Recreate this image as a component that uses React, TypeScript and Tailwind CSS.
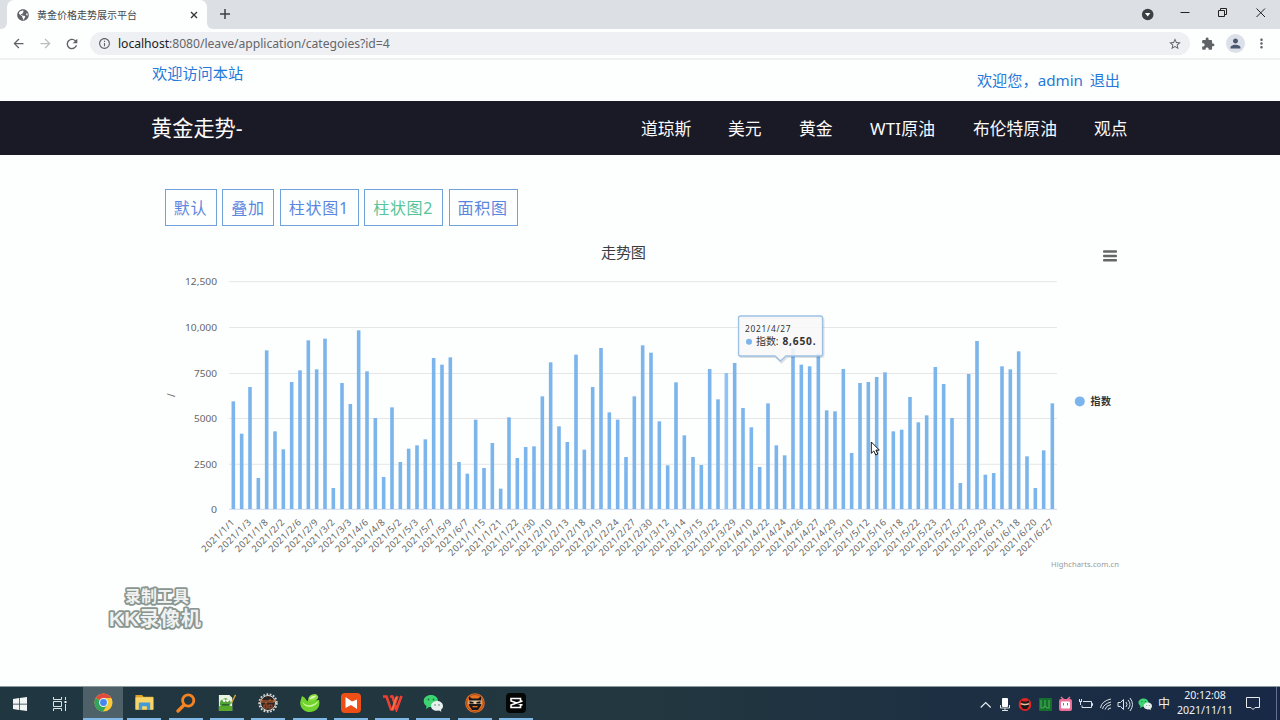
import React from "react";
import { FaGlobeAmericas } from "react-icons/fa";
import { MdPerson, MdRefresh, MdArrowBack, MdArrowForward, MdInfoOutline, MdMoreVert, MdStarBorder, MdExtension } from "react-icons/md";

const tops = [
  394, 491, 351, 624, 241, 484, 538, 336, 301, 211, 298, 206, 654, 339, 402, 181, 304, 444, 621, 412,
  576, 536, 526, 508, 264, 284, 262, 576, 611, 449, 594, 519, 656, 442, 564, 531, 529, 379, 277, 469,
  516, 254, 539, 351, 234, 427, 449, 561, 379, 226, 248, 454, 586, 337, 496, 561, 585, 297, 388, 309,
  279, 414, 472, 591, 400, 526, 556, 235, 284, 289, 250, 421, 424, 297, 549, 339, 336, 321, 307, 484,
  479, 381, 457, 436, 291, 342, 444, 639, 312, 213, 614, 609, 289, 298, 244, 559, 654, 541, 400,
];

const dates = (
  "1/1 1/3 1/8 2/2 2/6 2/9 3/2 3/3 4/6 4/8 5/2 5/3 5/7 5/9 6/7 1/15 1/21 1/22 1/30 2/10 2/13 2/18 2/19 2/24 2/27 2/30 " +
  "3/12 3/14 3/15 3/22 3/29 4/10 4/22 4/24 4/26 4/27 4/29 5/10 5/12 5/16 5/18 5/22 5/23 5/27 5/27 5/29 6/13 6/18 6/20 6/27"
).split(" ");

const gridLines: [string, number, number][] = [
  ["12,500", 281.7, 32],
  ["10,000", 327.5, 32],
  ["7500", 373.5, 23],
  ["5000", 418.5, 23],
  ["2500", 464.3, 23],
  ["0", 509.3, 6],
];

function Chart() {
  return (
    <svg className="block" width="980" height="340" viewBox="150 236 980 340" fontFamily="'Noto Sans','Noto Sans CJK SC',sans-serif">
      <text x="623.5" y="257.8" fontSize="15.2" fill="#3c3c3c" textAnchor="middle" textLength="45">走势图</text>
      <g fill="#666">
        <rect x="1103" y="250.3" width="14" height="2.5" rx="1" />
        <rect x="1103" y="254.7" width="14" height="2.5" rx="1" />
        <rect x="1103" y="259.1" width="14" height="2.5" rx="1" />
      </g>
      {gridLines.map(([label, y, w], i) => (
        <g key={label}>
          <line x1="229" x2="1057" y1={y} y2={y} stroke={i === 5 ? "#ccd6eb" : "#e6e6e6"} strokeWidth="1" />
          <text x={217 - w} y={y + 3.6} fontSize="9.8" fill="#666" textLength={w} lengthAdjust="spacingAndGlyphs">{label}</text>
        </g>
      ))}
      <text transform="translate(175 397) rotate(-90)" fontSize="10" fill="#666">/</text>
      {tops.map((t, i) => {
        const x = 233.2 + i * 8.357;
        const y = 270 + t / 3;
        return (
          <rect key={i} x={Math.round(x * 3) / 3 - 1.8} y={y} width="3.6" height={509 - y} fill={i === 59 ? "#90c4f5" : "#7cb5ec"} />
        );
      })}
      {dates.map((d, i) => (
        <text
          key={i}
          transform={`translate(${235 + i * 16.714} 523) rotate(-45)`}
          fontSize="9.3"
          fill="#666"
          textAnchor="end"
          textLength={d.length === 3 ? 42 : 47.5}
        >
          {"2021/" + d}
        </text>
      ))}
      <circle cx="1079.8" cy="401.4" r="5" fill="#7cb5ec" />
      <text x="1090.5" y="405" fontSize="10" fontWeight="700" fill="#333" textLength="20.5">指数</text>
      <text x="1119" y="567" fontSize="7.6" fill="#999" textAnchor="end" textLength="68">Highcharts.com.cn</text>
      <g>
        <path d="M740.5 317h80a2 2 0 0 1 2 2v35a2 2 0 0 1-2 2H786l-5.5 5.5-5.5-5.5h-34.5a2 2 0 0 1-2-2v-35a2 2 0 0 1 2-2z" transform="translate(1 1)" fill="none" stroke="#000" strokeOpacity=".12" strokeWidth="2" />
        <path d="M740.5 316h80a2 2 0 0 1 2 2v36a2 2 0 0 1-2 2H786l-5.5 5-5.5-5h-34.5a2 2 0 0 1-2-2v-36a2 2 0 0 1 2-2z" fill="#f8f8f8" fillOpacity=".88" stroke="#9dc1e4" strokeWidth="1.3" />
        <text x="745" y="332" fontSize="8.3" fill="#333" textLength="45.5">2021/4/27</text>
        <circle cx="749" cy="341.7" r="3" fill="#7cb5ec" />
        <text x="756" y="345" fontSize="10" fill="#333" textLength="22.5">指数:</text>
        <text x="782.5" y="345" fontSize="10.2" fontWeight="700" fill="#333" textLength="33">8,650.</text>
      </g>
      <path d="M871.3 442v11.3l2.5-2.3 2 4 2-1-1.9-3.9h3.4z" fill="#fff" stroke="#000" strokeWidth=".9" />
    </svg>
  );
}

function Browser() {
  return (
    <header>
      <div className="flex h-[29px] bg-[#dce0e5]">
        <div className="w-[7px] bg-[#fdfffe]"><div className="h-full rounded-br-[6px] bg-[#dce0e5]" /></div>
        <div className="flex w-[200px] items-center rounded-t-[7px] bg-[#fdfffe] pl-[10px] pr-[9px]">
          <FaGlobeAmericas className="size-[12px] text-[#5f6368]" />
          <span className="ml-[8px] pt-px text-[10px] text-[#45484c]">黄金价格走势展示平台</span>
          <svg className="ml-auto" width="8" height="8" viewBox="0 0 8 8" stroke="#333" strokeWidth="1.3"><path d="M1 1l6 6M7 1L1 7" /></svg>
        </div>
        <div className="w-[7px] bg-[#fdfffe]"><div className="h-full rounded-bl-[6px] bg-[#dce0e5]" /></div>
        <svg className="ml-[6px] mt-[9px]" width="10" height="10" viewBox="0 0 10 10" stroke="#3c4043" strokeWidth="1.5"><path d="M0 5h10M5 0v10" /></svg>
        <svg className="ml-auto" width="150" height="28" viewBox="1130 0 150 28" fill="none" stroke="#222" strokeWidth="1">
          <circle cx="1147.7" cy="14.5" r="5.8" fill="#3c4043" stroke="none" />
          <path d="M1145 13h5.4l-2.7 3.6z" fill="#fff" stroke="none" />
          <path d="M1180.5 12.5h9M1218.5 10.5h6v6h-6zM1220.5 10.5v-2h6v6h-2M1256.5 8.5l8.5 8.5M1265 8.5l-8.5 8.5" />
        </svg>
      </div>
      <div className="flex h-[31px] items-center border-b-2 border-[#eef0f1] bg-[#fdfffe] pl-[11px] pr-[11px] text-[#5f6368]">
        <MdArrowBack className="size-[15px] shrink-0" />
        <MdArrowForward className="ml-[12px] size-[15px] shrink-0 text-[#babcbe]" />
        <MdRefresh className="ml-[11px] size-[16px] shrink-0" />
        <div className="ml-[10px] flex h-[23px] w-[1100px] shrink-0 items-center rounded-full bg-[#eff0f3] pl-[8px] pr-[8px]">
          <MdInfoOutline className="size-[13px]" />
          <span className="ml-[7px] pt-px text-[12.2px] tracking-[-0.05px] text-[#63666b]"><span className="text-[#202124]">localhost</span>:8080/leave/application/categoies?id=4</span>
          <MdStarBorder className="ml-auto size-[14px]" />
        </div>
        <MdExtension className="ml-[11px] size-[14px] shrink-0" />
        <div className="ml-[11px] flex size-[19px] shrink-0 items-center justify-center rounded-full bg-[#dce0e8]"><MdPerson className="size-[15px] text-[#4b5873]" /></div>
        <MdMoreVert className="ml-[9px] size-[15px] shrink-0" />
      </div>
    </header>
  );
}

const navItems: [string, string][] = [
  ["道琼斯", "w-[87px]"],
  ["美元", "w-[71px]"],
  ["黄金", "w-[71px]"],
  ["WTI原油", "w-[103px] tracking-[0.2px]"],
  ["布伦特原油", "w-[121px]"],
  ["观点", "w-[35px]"],
];

const buttons: [string, string][] = [
  ["默认", "w-[52px] text-[#5b86e0]"],
  ["叠加", "w-[52px] text-[#5b86e0]"],
  ["柱状图1", "w-[79px] text-[#5b86e0]"],
  ["柱状图2", "w-[79px] text-[#55c59b]"],
  ["面积图", "w-[69px] text-[#5b86e0]"],
];

function WeChat({ size }: { size: number }) {
  return (
    <svg width={size} height={size} viewBox="0 0 20 20">
      <path d="M8 2c4 0 7 2.5 7 6s-3 6-7 6l-2 0-3 2 .5-3C1.8 12 .7 10 .7 8c0-3.500 3.300-6 7.300-6z" fill="#3cd571" />
      <path d="M14 8c3.300 0 6 2 6 5 0 1.600-.8 3-2 3.800l.3 2-2.300-1.200-2 .2c-3.300 0-6-2-6-4.800s2.700-5 6-5z" fill="#e9eeee" />
      <g fill="#23724a"><circle cx="5.5" cy="6.5" r=".9" /><circle cx="10.5" cy="6.5" r=".9" /><circle cx="12" cy="12" r=".7" /><circle cx="16" cy="12" r=".7" /></g>
    </svg>
  );
}

function Mask({ size, color }: { size: number; color: string }) {
  return (
    <svg width={size} height={size} viewBox="0 0 20 20">
      <circle cx="10" cy="10" r="9.8" fill={color} />
      <circle cx="10" cy="10" r="8.5" fill="none" stroke="#55200d" strokeOpacity=".45" />
      <path d="M4 3.500l3 2h6l3-2v9l-3 4.500H7l-3-4.500z" fill="#1c1717" />
      <path d="M3.500 7.500h13v3.500h-13z" fill="#e7c7a3" />
      <path d="M4.500 8.200l4 .8v1.500h-4zM15.500 8.200l-4 .8v1.500h4z" fill="#111" />
      <path d="M7.500 13h5v1.300h-5z" fill={color} />
    </svg>
  );
}

const apps: React.ReactNode[] = [
  <svg width="19" height="19" viewBox="0 0 20 20">
    <circle cx="10" cy="10" r="9.5" fill="#f9c936" />
    <path d="M10 10L1.800 5.200A9.500 9.500 0 0 1 18.200 5.200H10z" fill="#df4c3f" />
    <path d="M1.800 5.200A9.500 9.500 0 0 0 9.500 19.500L14 12.200 10 10z" fill="#33a45b" />
    <circle cx="10" cy="10" r="4.700" fill="#eef4f3" /><circle cx="10" cy="10" r="3.600" fill="#4587ee" />
  </svg>,
  <svg width="19" height="19" viewBox="0 0 20 20">
    <path d="M.5 2h7l1.500 2h10v13.500H.5z" fill="#dda329" /><path d="M.5 4.500h19v13H.5z" fill="#f9d568" />
    <path d="M4 18v-8h12v8h-3.500v-4h-5v4z" fill="#439bd6" />
  </svg>,
  <svg width="20" height="20" viewBox="0 0 20 20" fill="none" stroke="#f48320">
    <circle cx="12.200" cy="7.500" r="5.600" strokeWidth="2.800" /><path d="M8 12l-6 6" strokeWidth="3.300" strokeLinecap="round" />
  </svg>,
  <svg width="19" height="19" viewBox="0 0 20 20">
    <path d="M2 2h11l3 3v14H2z" fill="#e8f4df" /><path d="M2 14q7-3 14 0v5H2z" fill="#58ab2a" />
    <path d="M3 11q0-4 3-4 3-3 6 0 4 2 2 5-5 4-11 1z" fill="#53a33a" /><circle cx="7.500" cy="8" r="1.500" fill="#fff" /><circle cx="11" cy="8" r="1.500" fill="#fff" />
    <path d="M5 12.500h8" stroke="#173d23" /><path d="M19.500 2l-4.500 9" stroke="#d5a530" strokeWidth="1.500" />
  </svg>,
  <svg width="20" height="20" viewBox="0 0 20 20">
    <circle cx="10" cy="10" r="8.800" fill="none" stroke="#d6d7d3" strokeWidth="1.800" strokeDasharray="1.800 1.500" />
    <circle cx="10" cy="10" r="7.500" fill="#2c2422" stroke="#ddd" strokeWidth="1" />
    <path d="M3 7v3M3 7h2v3M7 7v3h2V7M11 10V7h2v3M15 10V7h2v1.500h-2" fill="none" stroke="#c86b32" strokeWidth="1" />
    <path d="M6 12h3v3H6zM11 12h3v3h-3z" fill="none" stroke="#a75128" strokeWidth="1.200" />
  </svg>,
  <svg width="20" height="20" viewBox="0 0 20 20">
    <path d="M8 8Q8 1 15.500 1q4 2 2 5-4 4-9.500 2z" fill="#8fe043" />
    <path d="M2 3q3 1 5 5l12-1c2 7-3 12-9 12S-1 14 .5 8z" fill="#70d32d" />
    <path d="M2 3q-1 7 5 9 7 1 12-5-3 7-10 7-8-1-7-11z" fill="#d4f7a4" opacity=".9" />
    <path d="M9 6q3-4 7-3-2 3-7 3z" fill="#ddf9b8" />
  </svg>,
  <svg width="20" height="20" viewBox="0 0 20 20"><rect width="20" height="20" rx="4" fill="#ee4f16" /><path d="M4.500 4L11 8.500l5-2V16l-6-4-5.500 3z" fill="#fff" /></svg>,
  <svg width="21" height="18" viewBox="0 0 21 18" fill="none">
    <path d="M1 2.500h3.500l4.500 13h2L15.500 2M8 2.500h2.500l4 13L19.500 2" stroke="#ed4032" strokeWidth="2.600" /><path d="M10 16l4.500-13" stroke="#f77040" strokeWidth="2" />
  </svg>,
  <WeChat size={20} />,
  <Mask size={20} color="#e87224" />,
  <svg width="20" height="20" viewBox="0 0 20 20"><rect width="20" height="20" rx="4" fill="#050707" /><path d="M14.500 8V5.500H5V8l11.500 4M14.500 12v2.500H5V12l11.500-4" fill="none" stroke="#fff" strokeWidth="1.600" /></svg>,
];

function Taskbar() {
  return (
    <footer className="flex h-[34px] shrink-0 border-t border-[#8e9b9e] bg-linear-to-r from-[#203640] via-[#22373f] via-50% to-[#182846] text-[#eef2f4]">
      <div className="flex w-[40px] items-center justify-center">
        <svg width="14" height="14" viewBox="0 0 14 14" fill="#f1f4f4"><path d="M0 2l6-.9v5.600H0zM6.700 1L14 0v6.700H6.700zM0 7.400h6V13l-6-.9zM6.700 7.400H14V14l-7.300-1z" /></svg>
      </div>
      <div className="flex w-[43px] items-center pl-[13px]">
        <svg width="15" height="14" viewBox="0 0 15 14" fill="none" stroke="#dce3e5"><path d="M.5 0v2.500h8V0M.5 14v-2.500h8V14M.5 4.500h8v5h-8zM12.500 0v3M12.500 7v7" /><path d="M11.500 4h2v2h-2z" fill="#fff" stroke="none" /></svg>
      </div>
      {apps.map((a, i) => (
        <div key={i} className={i === 0 ? "flex w-[40px] flex-col items-center bg-[#4f6168]" : i === 1 ? "flex w-[42px] flex-col items-center" : "flex w-[41.3px] flex-col items-center"}>
          <div className="flex h-[31px] items-center justify-center">{a}</div>
          <div className={i === 0 ? "h-[2px] w-full bg-[#80b9e8]" : "h-[2px] w-[34px] bg-[#80b9e8]"} />
        </div>
      ))}
      <div className="ml-auto flex w-[300px] items-center">
        <svg className="shrink-0" width="95" height="32" viewBox="980 687 95 32">
          <path d="M980.700 706.500l5-5 5 5" fill="none" stroke="#edf1f3" strokeWidth="1.100" />
          <rect x="1002" y="697" width="6" height="9" rx="1" fill="#fff" /><path d="M1000.500 704v3h9v-3M1005 707v3M1002 709.500h6" stroke="#dce2e4" fill="none" />
          <rect x="1039" y="697" width="13" height="13" rx="1" fill="#16702d" /><path d="M1041 699v8h2l2-2 2 2h2v-8M1045 699v6" stroke="#42a94f" strokeWidth="1.200" fill="none" />
          <rect x="1059" y="698" width="13" height="12" rx="2" fill="#ee7097" /><path d="M1061 696l3 3M1070 696l-3 3" stroke="#ee7097" strokeWidth="1.500" /><rect x="1061" y="700.500" width="9" height="7" rx="1" fill="#fff" /><path d="M1063.500 702v2.500M1067.500 702v2.500" stroke="#d94d7b" />
          <svg x="1018.500" y="697" width="13" height="13" viewBox="0 0 20 20"><circle cx="10" cy="10" r="10" fill="#df2524" /><path d="M4 3.500l3 2h6l3-2v9l-3 4.500H7l-3-4.500z" fill="#1c1717" /><path d="M3.500 7.500l5 1.500h3l5-1.500v2.500l-5 1h-3l-5-1z" fill="#e7c7a3" /></svg>
        </svg>
        <svg className="ml-[1px] shrink-0" width="62" height="22" viewBox="1076 692 62 22" fill="none" stroke="#dce2e7">
          <path d="M1083 700.500h8.500v6h-9.500v-2M1091.500 702.500h1v2h-1M1079.500 698v2M1081.500 698v2M1079 700.500h3M1080.500 701v3" />
          <path d="M1100.500 707q1-7 10.500-9M1102.500 708q1-5 8.500-7M1105 708.500q1-4 6-5M1108 709q0-2 3-2" />
          <path d="M1118 701.500h2.500l3-3v10l-3-3h-2.500zM1126 701q2 2.500 0 5M1128 699q4 4.500 0 9M1130 697q5 6.500 0 13" />
        </svg>
        <WeChat size={14} />
        <span className="ml-[6px] text-[12px] leading-[16px]">中</span>
        <div className="ml-[6px] w-[58px] shrink-0 text-center text-[10.6px] leading-[15px] tracking-[-0.05px]"><div className="-mt-[2px]">20:12:08</div><div>2021/11/11</div></div>
        <svg className="ml-[12px] shrink-0" width="15" height="15" viewBox="0 0 15 15" fill="none" stroke="#e5eaed"><path d="M.5 1.500h13v10H9l-2 2-2-2H.5z" /></svg>
        <div className="ml-auto mr-[3px] h-full w-px bg-[#65718a]" />
      </div>
    </footer>
  );
}

export default function App() {
  return (
    <div className="flex h-[720px] w-[1280px] flex-col overflow-hidden bg-[#fdfffe] font-['Noto_Sans','Noto_Sans_CJK_SC',sans-serif]">
      <Browser />
      <div className="flex h-[41px] shrink-0 justify-between pl-[152px] pr-[160px] text-[15.2px] text-[#2579d8]">
        <span className="mt-[3px] leading-[20px]">欢迎访问本站</span>
        <div className="mt-[10px] flex leading-[20px]"><span>欢迎您，</span><span className="w-[52px]">admin</span><span>退出</span></div>
      </div>
      <nav className="flex h-[54px] shrink-0 items-center bg-[#1a1926] pl-[151px] text-[#fafafa]">
        <span className="w-[490px] text-[21.200px]">黄金走势-</span>
        {navItems.map(([label, width]) => <span key={label} className={`${width} shrink-0 whitespace-nowrap pt-px text-[16.8px]`}>{label}</span>)}
      </nav>
      <main className="flex min-h-0 flex-1 flex-col">
        <div className="ml-[165px] mt-[34px] flex h-[37px] shrink-0 gap-[5.4px]">
          {buttons.map(([label, style]) => <button key={label} className={`${style} h-[36.5px] shrink-0 whitespace-nowrap border border-[#71a2d9] pr-px pt-[1px] text-center text-[16px] tracking-[0.7px]`}>{label}</button>)}
        </div>
        <div className="ml-[150px] mt-[10px] h-[340px] shrink-0"><Chart /></div>
        <svg className="ml-[100px] mt-[5px] shrink-0" width="110" height="55" viewBox="100 581 110 55" fontFamily="'Liberation Sans','Noto Sans CJK SC',sans-serif" fontWeight="700" fill="#f0f2f1" stroke="#8a9691" strokeWidth="3.6" strokeLinejoin="round" paintOrder="stroke">
          <text x="125" y="602" fontSize="16" textLength="64">录制工具</text>
          <text x="109" y="625.5" fontSize="20" textLength="92">KK录像机</text>
        </svg>
      </main>
      <Taskbar />
    </div>
  );
}
